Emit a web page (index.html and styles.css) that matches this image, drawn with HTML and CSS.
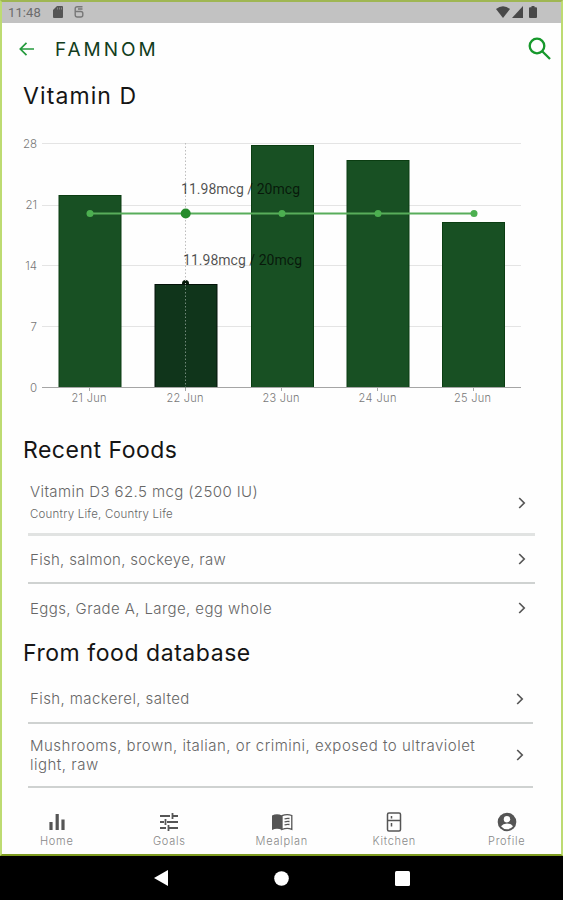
FILE: index.html
```html
<!DOCTYPE html>
<html lang="en">
<head>
  <meta charset="UTF-8">
  <meta name="viewport" content="width=device-width, initial-scale=1.0">
  <title>Famnom - Vitamin D</title>
  <link rel="stylesheet" href="styles.css">
</head>
<body>
  <div class="screen">
    <div class="status-bar">
      <span class="clock">11:48</span>
      <svg class="sd-icon" width="10" height="12" viewBox="0 0 10 12"><path d="M4 0h5a1 1 0 0 1 1 1v10a1 1 0 0 1-1 1H1a1 1 0 0 1-1-1V4z" fill="#555"/><path d="M4.5 1.5v2M6.5 1.5v2M8.5 1.5v2" stroke="#999" stroke-width=".7"/></svg>
      <svg class="app-icon" width="10" height="12" viewBox="0 0 10 12" fill="none" stroke="#777" stroke-width="1.4"><path d="M8.500 .8H3.200Q1.200 .8 1.200 2.800v6Q1.200 11 3.200 11h3.600Q8.800 11 8.800 9V7.500Q8.800 5.500 6.800 5.500H1.500M4 3h4.500"/></svg>
      <div class="status-right">
        <svg width="14" height="12" viewBox="0 0 14 12"><path d="M0 3Q7-2.500 14 3L7 12z" fill="#484848"/></svg>
        <svg width="11" height="12" viewBox="0 0 11 12"><path d="M11 0v12H0z" fill="#484848"/></svg>
        <svg class="battery" width="8" height="12" viewBox="0 0 8 12"><path d="M2.500 0h3v1.300H7q1 0 1 1V11q0 1-1 1H1q-1 0-1-1V2.300q0-1 1-1h1.500z" fill="#484848"/></svg>
      </div>
    </div>

    <div class="header">
      <svg class="back" width="16" height="14" viewBox="0 0 16 14" fill="none" stroke="#249a3c" stroke-width="1.7"><path d="M15 7H1.500M7.500 .8L1.300 7l6.200 6.200"/></svg>
      <span class="brand">FAMNOM</span>
      <svg class="search" width="24" height="24" viewBox="0 0 24 24" fill="none" stroke="#16982b" stroke-width="2.300"><circle cx="9" cy="9" r="7.300"/><path d="M14.200 14.200l7.800 7.800"/></svg>
    </div>

    <div class="content">
      <h1 class="title-vitamin">Vitamin D</h1>

      <svg class="chart" width="519" height="290" viewBox="2 125 519 290">
        <g stroke="#e4e4e4" stroke-width="1">
          <path d="M42 143.500H521M42 205.500H521M42 265.500H521M42 326.500H521"/>
        </g>
        <g class="axis-y">
          <text x="37" y="148">28</text>
          <text x="37" y="209">21</text>
          <text x="37" y="269.500">14</text>
          <text x="37" y="330.500">7</text>
          <text x="37" y="391.500">0</text>
        </g>
        <g fill="#185023" stroke="#0b3d12" stroke-width="1">
          <rect x="59" y="195.500" width="62" height="192"/>
          <rect x="251.500" y="145.500" width="62" height="242"/>
          <rect x="347" y="160.500" width="62" height="227"/>
          <rect x="442.500" y="222.500" width="62" height="165"/>
        </g>
        <circle cx="185.500" cy="283.500" r="3.500" fill="#061a0a"/>
        <rect x="155" y="284.500" width="62" height="103" fill="#10351b" stroke="#04130a"/>
        <path d="M42 387.500H521M89.500 388v3M185.500 388v3M281.500 388v3M377.500 388v3M473.500 388v3" stroke="#a5a5a5"/>
        <path d="M185.500 143V284" stroke="#bdbdbd" stroke-dasharray="1.500 2"/>
        <path d="M185.500 285V388" stroke="#71887a" stroke-dasharray="1.500 2"/>
        <path d="M90 213.500H474" stroke="#58ad5b" stroke-width="2"/>
        <g fill="#4caf50">
          <circle cx="90" cy="213.500" r="3.500"/>
          <circle cx="282" cy="213.500" r="3.500"/>
          <circle cx="378" cy="213.500" r="3.500"/>
          <circle cx="474" cy="213.500" r="3.500"/>
        </g>
        <circle cx="185.700" cy="213.500" r="5" fill="#258b2b"/>
        <g class="marker-label">
          <text x="181" y="193.500" textLength="119">11.98mcg / 20mcg</text>
          <text x="183" y="265" textLength="119">11.98mcg / 20mcg</text>
        </g>
        <g class="axis-x">
          <text x="89" y="402" textLength="35">21 Jun</text>
          <text x="185" y="402" textLength="37">22 Jun</text>
          <text x="281" y="402" textLength="37">23 Jun</text>
          <text x="377.500" y="402" textLength="38">24 Jun</text>
          <text x="472.500" y="402" textLength="37">25 Jun</text>
        </g>
      </svg>

      <h2 class="title-recent">Recent Foods</h2>
      <ul class="food-list">
        <li class="supplement">
          <div>
            <p>Vitamin D3 62.5 mcg (2500 IU)</p>
            <p class="brand-name">Country Life, Country Life</p>
          </div>
          <svg class="chevron" width="8" height="12" viewBox="0 0 8 12"><path d="M1.200 1L6.200 6l-5 5"/></svg>
        </li>
        <li class="salmon">
          <p>Fish, salmon, sockeye, raw</p>
          <svg class="chevron" width="8" height="12" viewBox="0 0 8 12"><path d="M1.200 1L6.200 6l-5 5"/></svg>
        </li>
        <li class="eggs">
          <p>Eggs, Grade A, Large, egg whole</p>
          <svg class="chevron" width="8" height="12" viewBox="0 0 8 12"><path d="M1.200 1L6.200 6l-5 5"/></svg>
        </li>
      </ul>

      <h2 class="title-database">From food database</h2>
      <ul class="food-list database">
        <li class="mackerel">
          <p>Fish, mackerel, salted</p>
          <svg class="chevron" width="8" height="12" viewBox="0 0 8 12"><path d="M1.200 1L6.200 6l-5 5"/></svg>
        </li>
        <li class="mushrooms">
          <p>Mushrooms, brown, italian, or crimini, exposed to ultraviolet<br>light, raw</p>
          <svg class="chevron" width="8" height="12" viewBox="0 0 8 12"><path d="M1.200 1L6.200 6l-5 5"/></svg>
        </li>
      </ul>
    </div>

    <div class="tab-bar">
      <div class="tab">
        <svg width="22" height="22" viewBox="0 0 22 22" stroke="#555" stroke-width="3.200"><path d="M5 11v8M11.200 3v16M17 8.500V19"/></svg>
        <span>Home</span>
      </div>
      <div class="tab">
        <svg width="22" height="22" viewBox="0 0 22 22" fill="none" stroke="#555" stroke-width="1.800"><path d="M2 5h10M15 5h5M14.500 2v6M2 11h4M9 11h11M7.500 8v6M2 17h6M11 17h9M10.500 14v6"/></svg>
        <span>Goals</span>
      </div>
      <div class="tab">
        <svg width="22" height="22" viewBox="0 0 22 22"><path d="M1 4.500Q6 2 11 4.500V19Q6 16.500 1 19z" fill="#555"/><path d="M11 4.700Q16 2.500 20.800 4.500V18.300Q16 16.500 11 18.500zM13.500 8q2.500-1 5-.5M13.500 11q2.500-1 5-.5M13.500 14q2.500-1 5-.5" fill="none" stroke="#555" stroke-width="1.300"/></svg>
        <span>Mealplan</span>
      </div>
      <div class="tab">
        <svg width="22" height="22" viewBox="0 0 22 22" fill="none" stroke="#555" stroke-width="1.500"><rect x="4.500" y="2" width="13" height="18" rx="1.500"/><path d="M4.500 9.500h13M8.500 5v2.500M8.500 12v3.500"/></svg>
        <span>Kitchen</span>
      </div>
      <div class="tab">
        <svg width="22" height="22" viewBox="0 0 22 22"><circle cx="11" cy="11" r="9.300" fill="#555"/><circle cx="11" cy="8.200" r="3.200" fill="#fff"/><path d="M5 15.200Q7 12.500 11 12.500T17 15.200Q14.500 18.300 11 18.300T5 15.200z" fill="#fff"/></svg>
        <span>Profile</span>
      </div>
    </div>
  </div>

  <div class="android-nav">
    <svg width="14" height="16" viewBox="0 0 14 16"><path d="M14 0v16L0 8z" fill="#fff"/></svg>
    <svg width="15" height="15" viewBox="0 0 15 15"><circle cx="7.500" cy="7.500" r="7.300" fill="#fff"/></svg>
    <svg width="15" height="15" viewBox="0 0 15 15"><rect width="15" height="15" rx="1.500" fill="#fff"/></svg>
  </div>
</body>
</html>
```
FILE: styles.css
```css
* {
  box-sizing: border-box;
}
body {
  margin: 0;
  background: #000;
  font-family: Inter, "Open Sans", sans-serif;
  color: #666;
}
h1, h2, p, ul {
  margin: 0;
  padding: 0;
}
svg {
  display: block;
  flex-shrink: 0;
}
.screen {
  height: 856px;
  display: flex;
  flex-direction: column;
  background: #fefefe;
  border: 2px solid #bddb72;
  border-top-color: #9fb653;
  border-bottom-color: #7f9c20;
}
.status-bar {
  height: 21px;
  background: #c2c2c2;
  display: flex;
  align-items: center;
  padding: 0 24px 1px 6px;
}
.clock {
  width: 45px;
  font: 13px Roboto, sans-serif;
  letter-spacing: 0.1px;
  color: #6c6c6c;
}
.app-icon {
  margin-left: 11px;
}
.status-right {
  display: flex;
  gap: 2px;
  margin-left: auto;
}
.battery {
  margin-left: 4px;
}
.header {
  height: 52px;
  display: flex;
  align-items: center;
  padding: 0 9px 0 17px;
}
.brand {
  margin-left: 20px;
  font-size: 19px;
  letter-spacing: 3px;
  color: #123d20;
}
.search {
  margin-left: auto;
}
.content {
  flex: 1;
}
h1, h2 {
  padding: 1px 0 0 21px;
  font-size: 23px;
  font-weight: 400;
  line-height: 29px;
  color: #151515;
}
.title-vitamin {
  margin-top: 6px;
  letter-spacing: 1.1px;
}
.chart {
  margin-top: 14px;
}
.chart text {
  font-size: 11px;
  font-weight: 300;
  fill: #777;
}
.chart .axis-y text {
  font-size: 11.5px;
  text-anchor: end;
}
.chart .axis-x text {
  text-anchor: middle;
}
.chart .marker-label text {
  font-family: Roboto, sans-serif;
  font-size: 14px;
  font-weight: 400;
  fill: #000;
  fill-opacity: 0.7;
}
.title-recent {
  margin-top: 20px;
  letter-spacing: 0.5px;
}
.title-database {
  margin-top: 6px;
  letter-spacing: 0.55px;
}
.food-list {
  width: 507px;
  margin-left: 26px;
  list-style: none;
}
.food-list.database {
  width: 505px;
}
.food-list li {
  display: flex;
  align-items: center;
  justify-content: space-between;
  padding: 0 9px 0 2px;
  border-bottom: 2px solid #cfd2d1;
}
.food-list p {
  font-size: 15px;
  font-weight: 300;
  line-height: 19px;
  letter-spacing: 0.4px;
}
.food-list .supplement {
  height: 71px;
  padding-top: 8px;
  border-bottom: 3px solid #e1e3e2;
}
.food-list .brand-name {
  margin-top: 4px;
  font-size: 11.5px;
  letter-spacing: 0.2px;
}
.food-list .salmon {
  height: 48px;
}
.food-list .salmon p {
  letter-spacing: 0.3px;
}
.food-list .eggs {
  height: 48px;
  border-bottom: 0;
}
.food-list .mackerel {
  height: 56px;
  padding-top: 7px;
}
.food-list .mushrooms {
  height: 64px;
}
.food-list .mushrooms p {
  letter-spacing: 0.5px;
}
.chevron {
  fill: none;
  stroke: #555;
  stroke-width: 1.7;
}
.tab-bar {
  height: 54px;
  display: flex;
  overflow: hidden;
}
.tab {
  flex: 0 0 112.5px;
  display: flex;
  flex-direction: column;
  align-items: center;
  padding-top: 11px;
  padding-right: 3px;
}
.tab span {
  font-size: 11px;
  font-weight: 300;
  line-height: 16px;
  letter-spacing: 0.7px;
  color: #888;
}
.android-nav {
  height: 44px;
  display: flex;
  align-items: center;
  justify-content: center;
  gap: 106px;
}
```
